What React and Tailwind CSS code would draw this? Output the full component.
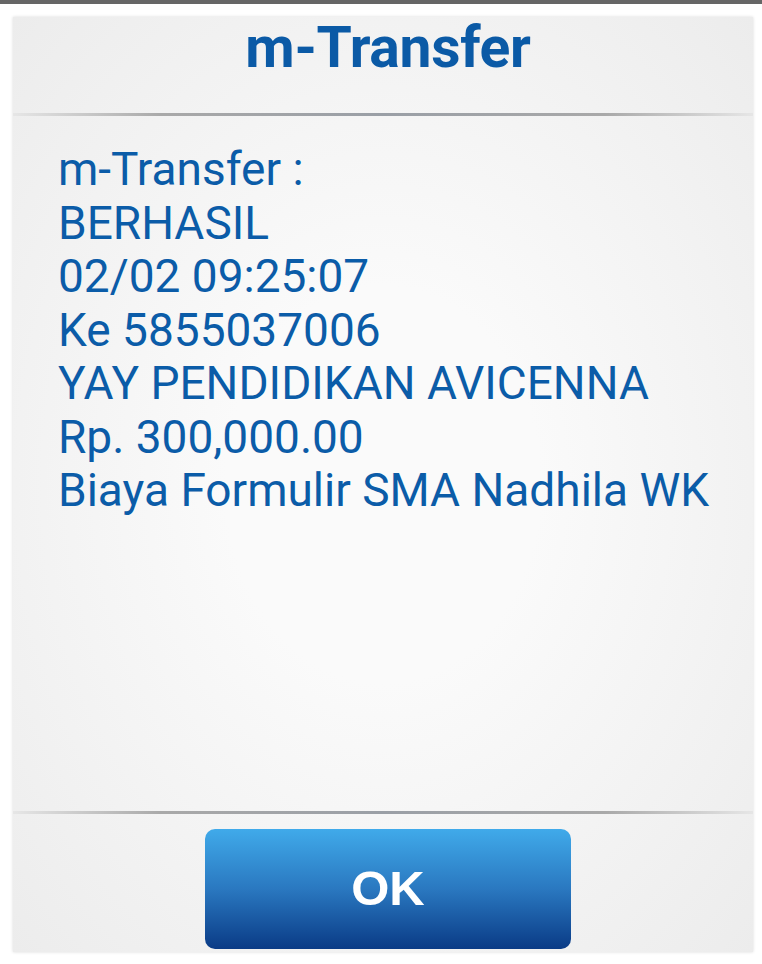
import React from "react";

const lines = [
  "m-Transfer :",
  "BERHASIL",
  "02/02 09:25:07",
  "Ke 5855037006",
  "YAY PENDIDIKAN AVICENNA",
  "Rp. 300,000.00",
  "Biaya Formulir SMA Nadhila WK",
];

function Divider() {
  return (
    <div className="h-[3px] w-full bg-[linear-gradient(to_right,#e6e6e6,#a9a9a9_20%,#9a9fa6_50%,#a9a9a9_80%,#e6e6e6)]" />
  );
}

export default function App() {
  return (
    <div className="w-[762px] h-[964px] bg-white flex flex-col font-['Roboto',sans-serif]">
      <div className="h-[4px] bg-[#666666]" />
      <div className="flex-1 pl-[13px] pr-[9px] pt-[13px] pb-[12px]">
        <div className="h-full flex flex-col bg-[radial-gradient(ellipse_at_center,#fafafa_30%,#ececec_100%)] shadow-[0_0_3px_rgba(0,0,0,0.15)]">
          <div className="h-[96px] flex items-start justify-center pl-[10px] pt-[1px]">
            <h1 className="text-[57px] font-bold text-[#0b5aa6] leading-[60px] tracking-[-0.3px]">m-Transfer</h1>
          </div>
          <Divider />
          <div className="flex-1 pl-[45px] pt-[27px]">
            {lines.map((l) => (
              <div key={l} className="text-[46px] leading-[53.5px] text-[#0b5ca8]">
                {l}
              </div>
            ))}
          </div>
          <Divider />
          <div className="h-[138px] flex justify-center pl-[10px] pt-[15px]">
            <button className="w-[366px] h-[120px] rounded-[10px] bg-[linear-gradient(to_bottom,#40aaea,#2a78c0_50%,#0a3b86)] text-white text-[49px] font-bold font-['Liberation_Sans',sans-serif]">
              OK
            </button>
          </div>
        </div>
      </div>
    </div>
  );
}
